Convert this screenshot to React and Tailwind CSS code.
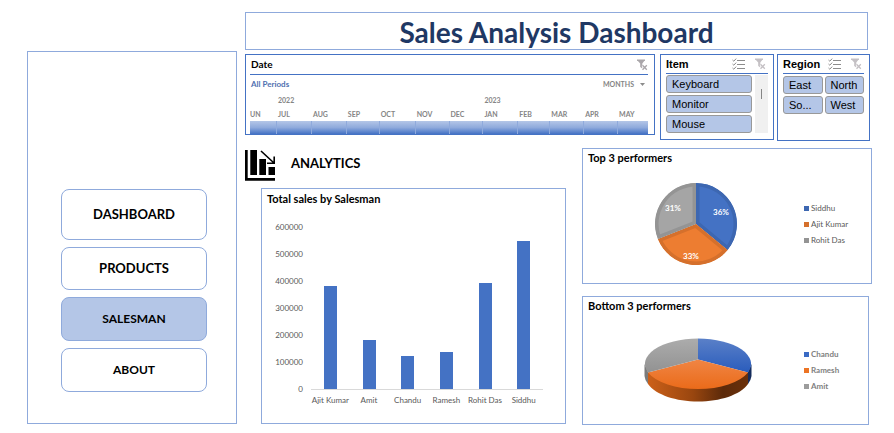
import React from "react";

const navItems = [
  { label: "DASHBOARD", style: "h-[51px] text-[13px]" },
  { label: "PRODUCTS", style: "h-[43px] text-[13px]" },
  { label: "SALESMAN", style: "h-[44px] bg-[#b4c6e7] text-[12px]" },
  { label: "ABOUT", style: "h-[44px] text-[12px]" },
];

const months = [
  { name: "JUL", days: 35, year: "2022" },
  { name: "AUG", days: 35 },
  { name: "SEP", days: 33 },
  { name: "OCT", days: 36 },
  { name: "NOV", days: 34 },
  { name: "DEC", days: 34 },
  { name: "JAN", days: 35, year: "2023" },
  { name: "FEB", days: 32 },
  { name: "MAR", days: 34 },
  { name: "APR", days: 34 },
  { name: "MAY", days: 31 },
];

const sales = [
  { name: "Ajit Kumar", value: 382000 },
  { name: "Amit", value: 182000 },
  { name: "Chandu", value: 122000 },
  { name: "Ramesh", value: 138000 },
  { name: "Rohit Das", value: 393000 },
  { name: "Siddhu", value: 548000 },
];

const ticks = [600000, 500000, 400000, 300000, 200000, 100000, 0];

function ChecklistIcon() {
  return (
    <svg width="14" height="12" viewBox="0 0 14 12" fill="none" stroke="#8c8c8c" aria-hidden="true">
      <path d="M5 2.500h8M5 6.500h8M5 10.500h8" />
      <path d="M.5 2l1.300 1.200L4.200.6M.5 6l1.300 1.200 2.400-2.600M.5 10l1.300 1.200 2.400-2.600" />
    </svg>
  );
}

function ClearFilterIcon({ color = "#c4c0c4" }) {
  return (
    <svg width="12" height="12" viewBox="0 0 12 12" aria-hidden="true">
      <path d="M1 1h8L6.300 4.500V9.500L4.200 8V4.500Z" fill={color} />
      <path d="M1 1.200h8" stroke={color} strokeWidth="1.4" />
      <path d="M6.500 6.200l4.300 4.600M10.800 6.200L6.500 10.800" stroke="#fff" strokeWidth="2.6" />
      <path d="M6.500 6.200l4.300 4.600M10.800 6.200L6.500 10.800" stroke={color} strokeWidth="1.3" />
    </svg>
  );
}

function Timeline() {
  return (
    <section className="h-[81px] min-w-0 flex-1 border border-[#4472c4] pr-[6px] pl-1">
      <header className="flex h-5 items-center justify-between border-b border-[#4472c4]">
        <h2 className="pb-[2px] pl-px text-[10px] leading-3 font-bold">Date</h2>
        <button aria-label="Clear date filter"><ClearFilterIcon color="#aaa6aa" /></button>
      </header>
      <div className="flex h-[18px] items-center justify-between text-[8px] leading-3 font-bold">
        <span className="pl-px text-[#4f71b0]">All Periods</span>
        <button className="flex items-center gap-[6px] pr-[3px] text-[7px] text-[#858585]">
          MONTHS
          <svg width="5" height="3" viewBox="0 0 5 3" aria-hidden="true"><path d="M0 0h5L2.500 3Z" fill="#8c8c8c" /></svg>
        </button>
      </div>
      <div className="flex text-[7px] leading-[14px] font-bold text-[#858585]">
        <div className="flex w-[26px] shrink-0 flex-col">
          <span className="h-[14px]" />
          <span className="h-[14px]">UN</span>
          <span className="h-[13px] bg-linear-to-b from-[#b4c6e7] via-[#8faadc] to-[#4472c4]" />
        </div>
        {months.map((m) => (
          <div key={m.name} className="flex min-w-0 basis-0 flex-col" style={{ flexGrow: m.days }}>
            <span className="h-[14px] pl-[2px]">{m.year}</span>
            <span className="h-[14px] pl-[2px]">{m.name}</span>
            <span className="h-[13px] border-l border-[#8faadc] bg-linear-to-b from-[#b4c6e7] via-[#8faadc] to-[#4472c4]" />
          </div>
        ))}
      </div>
    </section>
  );
}

function SlicerHeader({ title }) {
  return (
    <header className="flex h-[19px] items-center border-b border-[#4472c4]">
      <h2 className="mr-auto text-[11px] leading-3 font-bold">{title}</h2>
      <button aria-label="Multi-select" className="mr-[8px]"><ChecklistIcon /></button>
      <button aria-label={"Clear " + title + " filter"} className="mr-[2px]"><ClearFilterIcon /></button>
    </header>
  );
}

function SlicerButton({ children }) {
  return (
    <button className="h-[18px] rounded-[3px] border border-[#999] bg-[#b4c6e7] pl-[5px] text-left text-[11px] leading-4 text-black">
      {children}
    </button>
  );
}

function Legend({ items, className }) {
  return (
    <ul className={className}>
      {items.map((i) => (
        <li key={i.name} className="flex h-4 items-center gap-[2px] whitespace-nowrap">
          <span className="size-[5px]" style={{ backgroundColor: i.color }} />
          {i.name}
        </li>
      ))}
    </ul>
  );
}

const topSlices = [
  { id: "siddhu", d: "M41 41V0A41 41 0 0 1 72.600 67.100Z", fill: "#4472c4", edge: "#3d67b1" },
  { id: "ajit", d: "M41 41L72.600 67.100A41 41 0 0 1 2.900 56.100Z", fill: "#ed7d31", edge: "#d5702c" },
  { id: "rohit", d: "M41 41L2.900 56.100A41 41 0 0 1 41 0Z", fill: "#a5a5a5", edge: "#949494" },
];

function TopPie() {
  return (
    <svg width="82" height="82" viewBox="0 0 82 82" role="img" aria-label="Top 3 performers">
      {topSlices.map((s) => (
        <g key={s.id}>
          <clipPath id={s.id}><path d={s.d} /></clipPath>
          <path d={s.d} fill={s.fill} stroke={s.edge} strokeWidth="7" clipPath={"url(#" + s.id + ")"} />
        </g>
      ))}
      <g fill="#fff" fontSize="8" fontWeight="700" textAnchor="middle">
        <text x="66" y="32">36%</text>
        <text x="36" y="76">33%</text>
        <text x="18" y="28">31%</text>
      </g>
    </svg>
  );
}

function BottomPie() {
  return (
    <svg width="108" height="64" viewBox="0 0 108 64" role="img" aria-label="Bottom 3 performers">
      <defs>
        <linearGradient id="rim" x1="0" x2="1">
          <stop offset="0" stopColor="#cc6019" />
          <stop offset=".45" stopColor="#99460f" />
          <stop offset=".75" stopColor="#5c2a0a" />
          <stop offset="1" stopColor="#6b300a" />
        </linearGradient>
        <linearGradient id="blueTop" x1="0" x2="0" y1="0" y2="1">
          <stop offset="0" stopColor="#5a80c8" /><stop offset="1" stopColor="#2a5cbc" />
        </linearGradient>
        <linearGradient id="orangeTop" x1="0" x2="0" y1="0" y2="1">
          <stop offset="0" stopColor="#f08544" /><stop offset="1" stopColor="#ea6b1a" />
        </linearGradient>
        <linearGradient id="greyTop" x1="0" x2="0" y1="0" y2="1">
          <stop offset="0" stopColor="#acacac" /><stop offset="1" stopColor="#929292" />
        </linearGradient>
      </defs>
      <path d="M.5 26V38Q.8 42 4 46V34Z" fill="#7b7b7b" />
      <path d="M107.500 26V38Q107 42 104 46V34Z" fill="#152c5c" />
      <path d="M4 34.500V46C12 57 32 63.500 54 63.500S96 57 104 46V34.500Z" fill="url(#rim)" />
      <path d="M54 21.500V.5A53.500 25.500 0 0 1 104 34.500Z" fill="url(#blueTop)" />
      <path d="M54 21.500L104 34.500A53.500 25.500 0 0 1 4 34.500Z" fill="url(#orangeTop)" />
      <path d="M54 21.500L4 34.500A53.500 25.500 0 0 1 54 .5Z" fill="url(#greyTop)" />
    </svg>
  );
}

function SalesChart() {
  return (
    <section className="ml-4 h-[236px] border border-[#8faadc] pr-[22px] pl-[5px]">
      <h2 className="pt-[3px] text-[11px] leading-[14px] font-bold">Total sales by Salesman</h2>
      <div className="mt-[14px] flex text-[8px] text-[#595959]">
        <div className="w-9 shrink-0 text-right">
          {ticks.map((t) => (
            <div key={t} className="h-[27px] leading-[15px]">{t}</div>
          ))}
        </div>
        <div className="ml-2 min-w-0 flex-1 pt-[7px]">
          <div className="flex h-[163px] items-end border-b border-[#d9d9d9]">
            {sales.map((s) => (
              <div key={s.name} className="flex h-full flex-1 items-end justify-center">
                <div className="w-[13px] bg-[#4472c4]" style={{ height: s.value / 6000 + "%" }} />
              </div>
            ))}
          </div>
          <div className="flex pt-1 leading-3 whitespace-nowrap">
            {sales.map((s) => (
              <div key={s.name} className="flex w-0 flex-1 justify-center">{s.name}</div>
            ))}
          </div>
        </div>
      </div>
    </section>
  );
}

export default function App() {
  return (
    <div className="flex items-start bg-white pt-3 pr-[22px] pb-2 pl-[27px] font-['Lato','Liberation_Sans',sans-serif] text-black">
      <nav className="mt-[39px] flex h-[373px] w-[210px] shrink-0 flex-col gap-[7px] border border-[#8faadc] pt-[137px] pr-[29px] pl-[33px]">
        {navItems.map((n) => (
          <button key={n.label} className={"shrink-0 rounded-[8px] border border-[#8faadc] font-bold " + n.style}>
            {n.label}
          </button>
        ))}
      </nav>

      <main className="ml-2 min-w-0 flex-1">
        <h1 className="mr-1 h-[38px] border border-[#8faadc] pt-px text-center text-[28px] leading-9 font-bold text-[#1f3864]">
          Sales Analysis Dashboard
        </h1>

        <div className="mt-1 mr-[2px] flex items-start gap-[5px]">
          <Timeline />
          <div className="flex shrink-0 items-start gap-[3px]">
            <section className="h-[86px] w-[114px] border border-[#4472c4] px-[5px] font-['Liberation_Sans',sans-serif]">
              <SlicerHeader title="Item" />
              <div className="flex gap-[3px] pt-px">
                <div className="flex flex-1 flex-col gap-[2px]">
                  <SlicerButton>Keyboard</SlicerButton>
                  <SlicerButton>Monitor</SlicerButton>
                  <SlicerButton>Mouse</SlicerButton>
                </div>
                <div className="flex w-[13px] justify-center bg-[#f0f0f0] pt-[14px]">
                  <div className="h-[10px] w-px bg-[#858585]" />
                </div>
              </div>
            </section>
            <section className="h-[87px] w-[93px] border border-[#4472c4] px-[5px] font-['Liberation_Sans',sans-serif]">
              <SlicerHeader title="Region" />
              <div className="grid grid-cols-2 gap-[2px] pt-[2px]">
                <SlicerButton>East</SlicerButton>
                <SlicerButton>North</SlicerButton>
                <SlicerButton>So...</SlicerButton>
                <SlicerButton>West</SlicerButton>
              </div>
            </section>
          </div>
        </div>

        <div className="mt-[7px] grid grid-cols-[321fr_290fr] gap-4">
          <div className="min-w-0">
            <div className="flex h-10 items-start gap-4 pt-[2px]">
              <svg width="30" height="31" viewBox="0 0 30 31" aria-hidden="true">
                <path d="M0 0h2.700v28H30v2.700H0ZM5.300 0H12v25H5.300ZM14.300 9H21v16H14.300ZM23.500 17H30v8H23.500Z" />
                <path d="M16 1L29 13M29.200 6.500V13.300H22" fill="none" stroke="#000" strokeWidth="1.6" />
              </svg>
              <h2 className="pt-[5px] text-[13px] leading-4 font-bold">ANALYTICS</h2>
            </div>
            <SalesChart />
          </div>

          <div className="flex min-w-0 flex-col gap-3">
            <section className="h-[136px] border border-[#8faadc]">
              <h2 className="pt-[2px] pl-[5px] text-[11px] leading-[14px] font-bold">Top 3 performers</h2>
              <div className="mt-[18px] flex items-center pl-[72px]">
                <TopPie />
                <Legend
                  className="mr-[11px] ml-auto w-[56px] text-[8px] text-[#595959]"
                  items={[
                    { name: "Siddhu", color: "#3d67b1" },
                    { name: "Ajit Kumar", color: "#d5702c" },
                    { name: "Rohit Das", color: "#949494" },
                  ]}
                />
              </div>
            </section>
            <section className="mr-[3px] h-[129px] border border-[#8faadc]">
              <h2 className="pt-[2px] pl-[5px] text-[11px] leading-[14px] font-bold">Bottom 3 performers</h2>
              <div className="mt-[25px] flex items-center pl-[61px]">
                <BottomPie />
                <Legend
                  className="mr-[8px] ml-auto w-[56px] text-[8px] font-bold text-[#7f7f7f]"
                  items={[
                    { name: "Chandu", color: "#3a6ac4" },
                    { name: "Ramesh", color: "#ec7424" },
                    { name: "Amit", color: "#9c9c9c" },
                  ]}
                />
              </div>
            </section>
          </div>
        </div>
      </main>
    </div>
  );
}
